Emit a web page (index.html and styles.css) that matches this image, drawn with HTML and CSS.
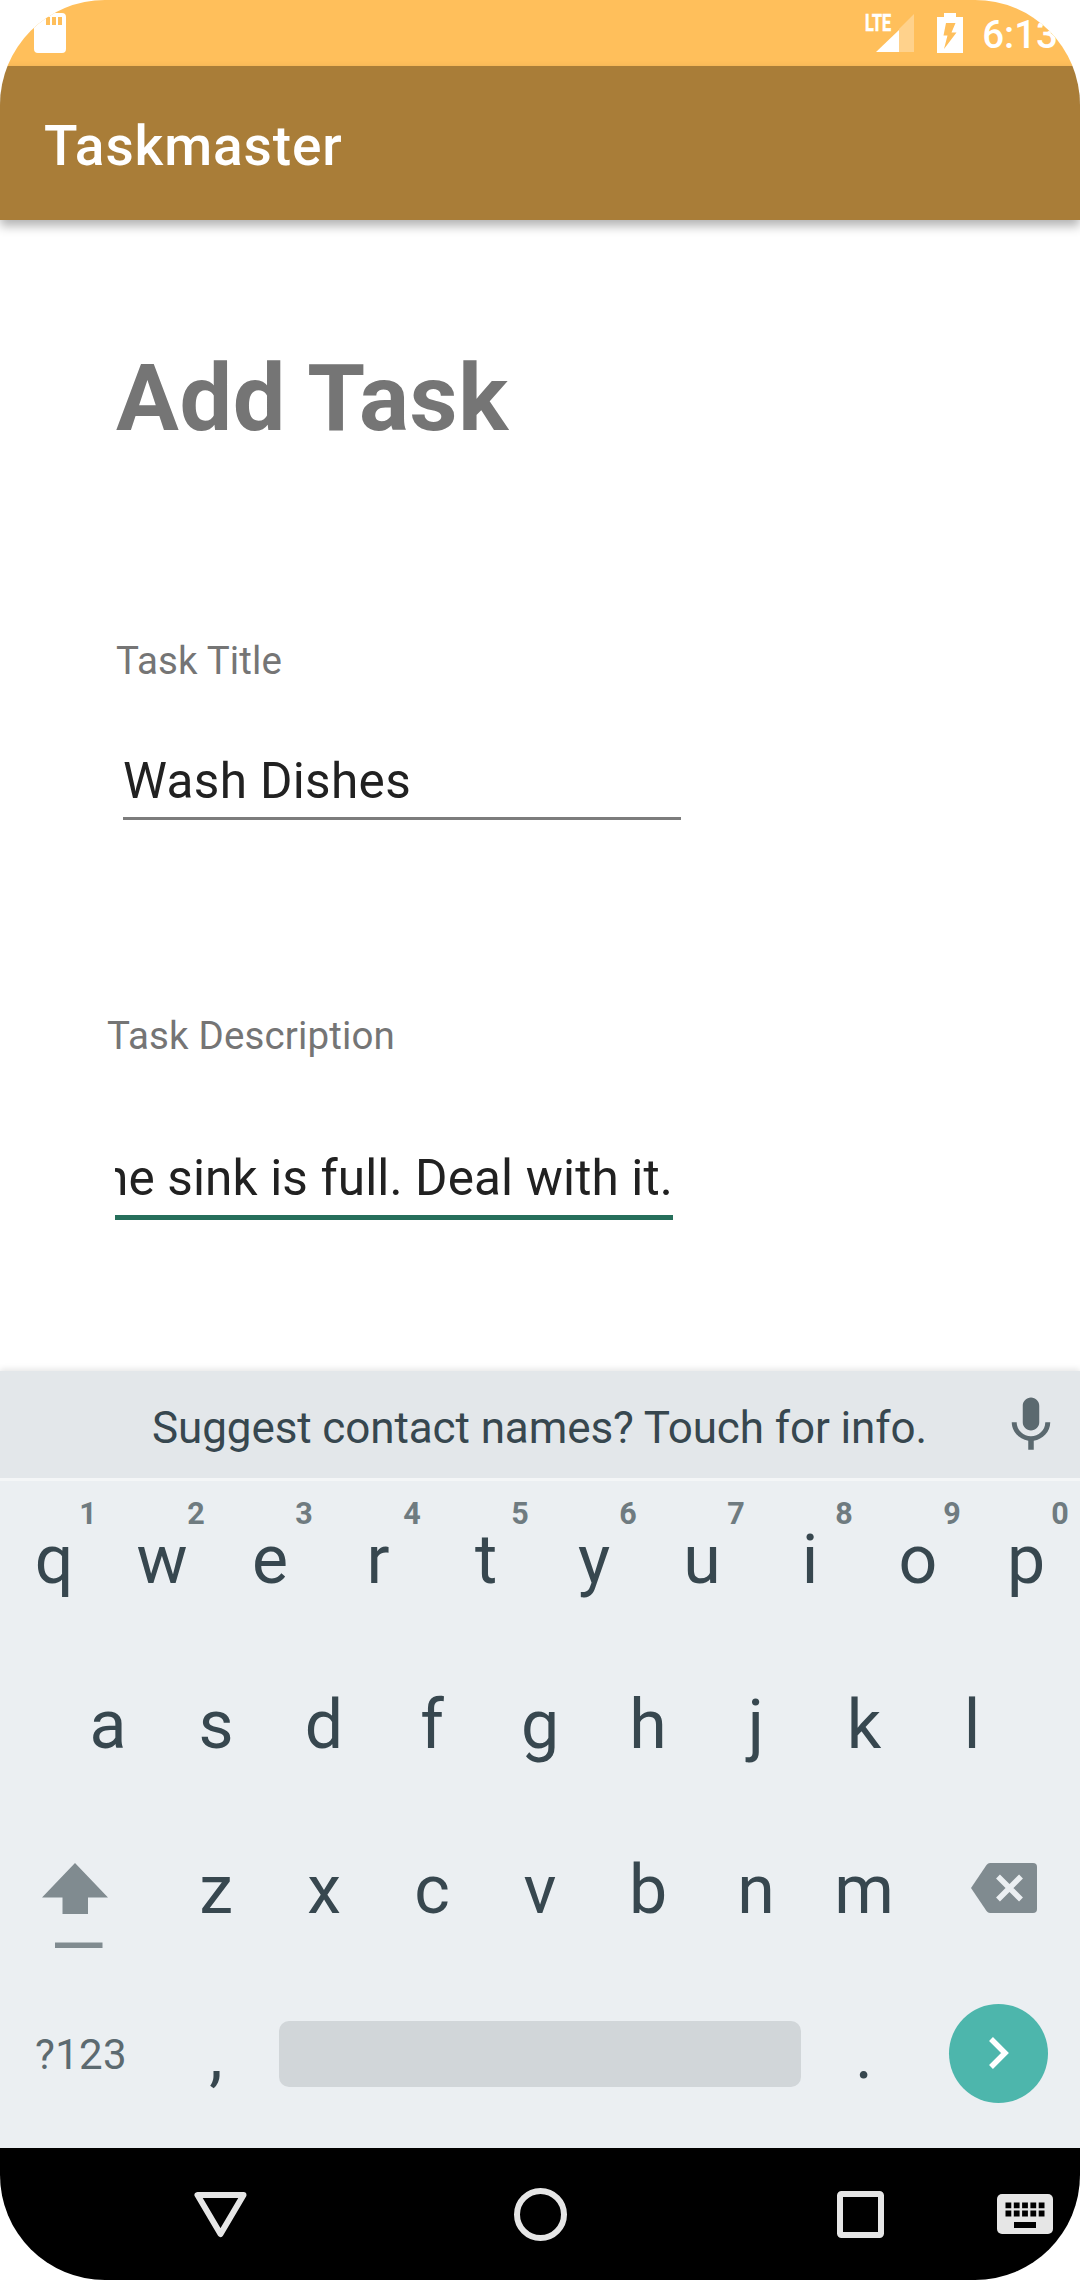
FILE: index.html
```html
<!DOCTYPE html>
<html lang="en">
<head>
<meta charset="utf-8">
<title>Taskmaster</title>
<link rel="stylesheet" href="styles.css">
</head>
<body>
<div class="phone">
  <header class="status">
    <svg class="sd" width="32" height="40" viewBox="0 0 32 40"><path fill="#fff" fill-rule="evenodd" d="M12 0H28Q32 0 32 4V36Q32 40 28 40H4Q0 40 0 36V12ZM12 4V12H16V4ZM18 4V12H22V4ZM24 4V12H28V4Z"/></svg>
    <div class="status-right">
      <svg class="signal" width="50" height="40" viewBox="0 0 50 40">
        <path fill="#fff" fill-opacity=".3" d="M49 1V39H34V16Z"/>
        <path fill="#fff" d="M34 17V39H11Z"/>
        <text class="lte" x="0" y="18" textLength="26" lengthAdjust="spacingAndGlyphs">LTE</text>
      </svg>
      <svg class="battery" width="26" height="40" viewBox="0 0 26 40"><path fill="#fff" fill-rule="evenodd" d="M7 0H19V4H26V40H0V4H7ZM9 10 6.500 22.500H10.500L7 36L19.500 19.500H14.500L18.500 10Z"/></svg>
      <span class="clock">6:13</span>
    </div>
  </header>
  <div class="appbar">Taskmaster</div>
  <main class="form">
    <h1 class="heading">Add Task</h1>
    <div class="label label-title">Task Title</div>
    <div class="field field-title">Wash Dishes</div>
    <div class="label label-desc">Task Description</div>
    <div class="field field-desc"><span>The sink is full. Deal with it.</span></div>
  </main>
  <section class="suggest">
    <span class="suggest-text">Suggest contact names? Touch for info.</span>
    <svg class="mic" width="66" height="66" viewBox="0 0 24 24"><path fill="#5b696f" d="M12 14c1.660 0 3-1.340 3-3V5c0-1.660-1.340-3-3-3S9 3.340 9 5v6c0 1.660 1.340 3 3 3zm5.200-3c0 3-2.540 5.100-5.200 5.100S6.800 14 6.800 11H5c0 3.410 2.720 6.230 6 6.720V21h2v-3.280c3.280-.480 6-3.300 6-6.720h-1.800z"/></svg>
  </section>
  <section class="keys">
    <div class="row">
      <span class="key">q<i>1</i></span><span class="key">w<i>2</i></span><span class="key">e<i>3</i></span><span class="key">r<i>4</i></span><span class="key">t<i>5</i></span><span class="key">y<i>6</i></span><span class="key">u<i>7</i></span><span class="key">i<i>8</i></span><span class="key">o<i>9</i></span><span class="key">p<i>0</i></span>
    </div>
    <div class="row row-home">
      <span class="key">a</span><span class="key">s</span><span class="key">d</span><span class="key">f</span><span class="key">g</span><span class="key">h</span><span class="key">j</span><span class="key">k</span><span class="key">l</span>
    </div>
    <div class="row">
      <span class="wide"><svg width="162" height="165" viewBox="0 0 162 165"><path fill="#808b90" d="M75 48 108 82.500H88V99H62.500V82.500H42ZM55 127.500H102.500V133H55Z"/></svg></span>
      <span class="key">z</span><span class="key">x</span><span class="key">c</span><span class="key">v</span><span class="key">b</span><span class="key">n</span><span class="key">m</span>
      <span class="wide"><svg width="162" height="165" viewBox="0 0 162 165"><path fill="#808b90" d="M72 48H115Q119 48 119 52V94Q119 98 115 98H72Q70 98 68.500 96L53 73 68.500 50Q70 48 72 48Z"/><path fill="none" stroke="#ebeff2" stroke-width="5.500" d="M80 61.500 103 84.500M103 61.500 80 84.500"/></svg></span>
    </div>
    <div class="row">
      <span class="wide symbols">?123</span>
      <span class="key">,</span>
      <span class="space-cell"><span class="space"></span></span>
      <span class="key">.</span>
      <span class="wide"><svg width="162" height="165" viewBox="0 0 162 165"><circle cx="80.500" cy="73.500" r="49.500" fill="#4db6ac"/><path fill="none" stroke="#fff" stroke-width="5.500" d="M73 59 87 73 73 87"/></svg></span>
    </div>
  </section>
  <nav class="nav">
    <svg width="60" height="60" viewBox="0 0 60 60"><path fill="none" stroke="#e6e6e6" stroke-width="6" stroke-linejoin="round" d="M7.500 11H53.500L30.500 50Z"/></svg>
    <svg width="60" height="60" viewBox="0 0 60 60"><circle cx="30.500" cy="30.500" r="23.500" fill="none" stroke="#e6e6e6" stroke-width="6"/></svg>
    <svg width="60" height="60" viewBox="0 0 60 60"><rect x="10" y="10" width="41" height="41" rx="1.500" fill="none" stroke="#e6e6e6" stroke-width="6"/></svg>
    <svg class="ime" width="56" height="40" viewBox="0 0 56 40"><rect width="56" height="40" rx="5" fill="#e6e6e6"/><path stroke="#000" stroke-width="5.800" stroke-dasharray="5.800 2.500" d="M8.500 11.300H48M8.500 19.500H48"/><path fill="#000" d="M17 28H39V34H17Z"/></svg>
  </nav>
</div>
</body>
</html>
```
FILE: styles.css
```css
* { box-sizing: border-box; }

body {
  margin: 0;
  background: #fff;
  font-family: Roboto, "Liberation Sans", sans-serif;
}

svg { display: block; }

.phone {
  display: flex;
  flex-direction: column;
  width: 1080px;
  height: 2280px;
  border-radius: 105px;
  overflow: hidden;
  background: #fff;
}

.status {
  display: flex;
  justify-content: space-between;
  height: 66px;
  padding: 13px 22px 0 34px;
  background: #ffbf5b;
}

.status-right { display: flex; }

.signal { overflow: visible; }

.lte {
  font: 700 23px Roboto, sans-serif;
  fill: #fff;
  stroke: #fff;
  stroke-width: .6px;
}

.battery { margin-left: 22px; }

.clock {
  margin-left: 19px;
  font-size: 38.5px;
  font-weight: 500;
  line-height: 44px;
  color: #fff;
}

.appbar {
  display: flex;
  align-items: center;
  height: 154px;
  padding: 6px 44px 0;
  background: #a97d38;
  box-shadow: 0 6px 10px rgba(0, 0, 0, .3);
  color: #fff;
  font-size: 55px;
  font-weight: 500;
  letter-spacing: .9px;
}

.form {
  flex: 1;
  padding: 123px 0 0 115px;
}

.heading {
  margin: 0 0 0 1px;
  font-size: 93.5px;
  line-height: 110px;
  font-weight: 700;
  letter-spacing: .6px;
  color: #757575;
}

.label {
  font-size: 38.5px;
  line-height: 46px;
  letter-spacing: .15px;
  color: #757575;
}

.label-title { margin: 185px 0 0 1px; }
.label-desc { margin: 193px 0 0 -8px; }

.field {
  width: 558px;
  font-size: 49.5px;
  line-height: 60px;
  color: #212121;
  white-space: nowrap;
}

.field-title {
  margin: 67px 0 0 8px;
  height: 69px;
  letter-spacing: .35px;
  border-bottom: 3px solid #7c7c7c;
}

.field-desc {
  display: flex;
  justify-content: flex-end;
  margin-top: 89px;
  height: 72px;
  letter-spacing: .13px;
  border-bottom: 5px solid #266f5b;
  overflow: hidden;
}

.suggest {
  display: grid;
  grid-template-columns: 998px 66px;
  align-items: center;
  height: 110px;
  background: #e3e7ea;
  border-bottom: 3px solid #f4f6f7;
  box-shadow: 0 -2px 6px rgba(0, 0, 0, .1);
}

.suggest-text {
  padding: 6px 0 0 152px;
  font-size: 44px;
  letter-spacing: -.1px;
  color: #37474f;
  white-space: nowrap;
}

.keys {
  height: 667px;
  padding-top: 4px;
  background: #ebeff2;
}

.row {
  display: flex;
  height: 165px;
}

.row-home { padding: 0 54px; }

.key {
  position: relative;
  width: 108px;
  font-size: 68px;
  line-height: 150px;
  text-align: center;
  color: #37474f;
}

.key i {
  position: absolute;
  top: 14px;
  left: 66px;
  width: 44px;
  font-size: 30.5px;
  line-height: 30px;
  font-style: normal;
  font-weight: 700;
  color: #6f7b80;
}

.wide { width: 162px; }

.symbols {
  padding-left: 35px;
  font-size: 42px;
  line-height: 150px;
  letter-spacing: .3px;
  color: #5c6a70;
}

.space-cell {
  width: 540px;
  padding: 41px 9px 0;
}

.space {
  display: block;
  height: 66px;
  border-radius: 10px;
  background: #d1d6d9;
}

.nav {
  display: grid;
  grid-template-columns: 60px 60px 60px 56px;
  column-gap: 260px;
  align-items: center;
  height: 132px;
  padding-left: 190px;
  background: #000;
}

.ime { margin-left: -153px; }
```
